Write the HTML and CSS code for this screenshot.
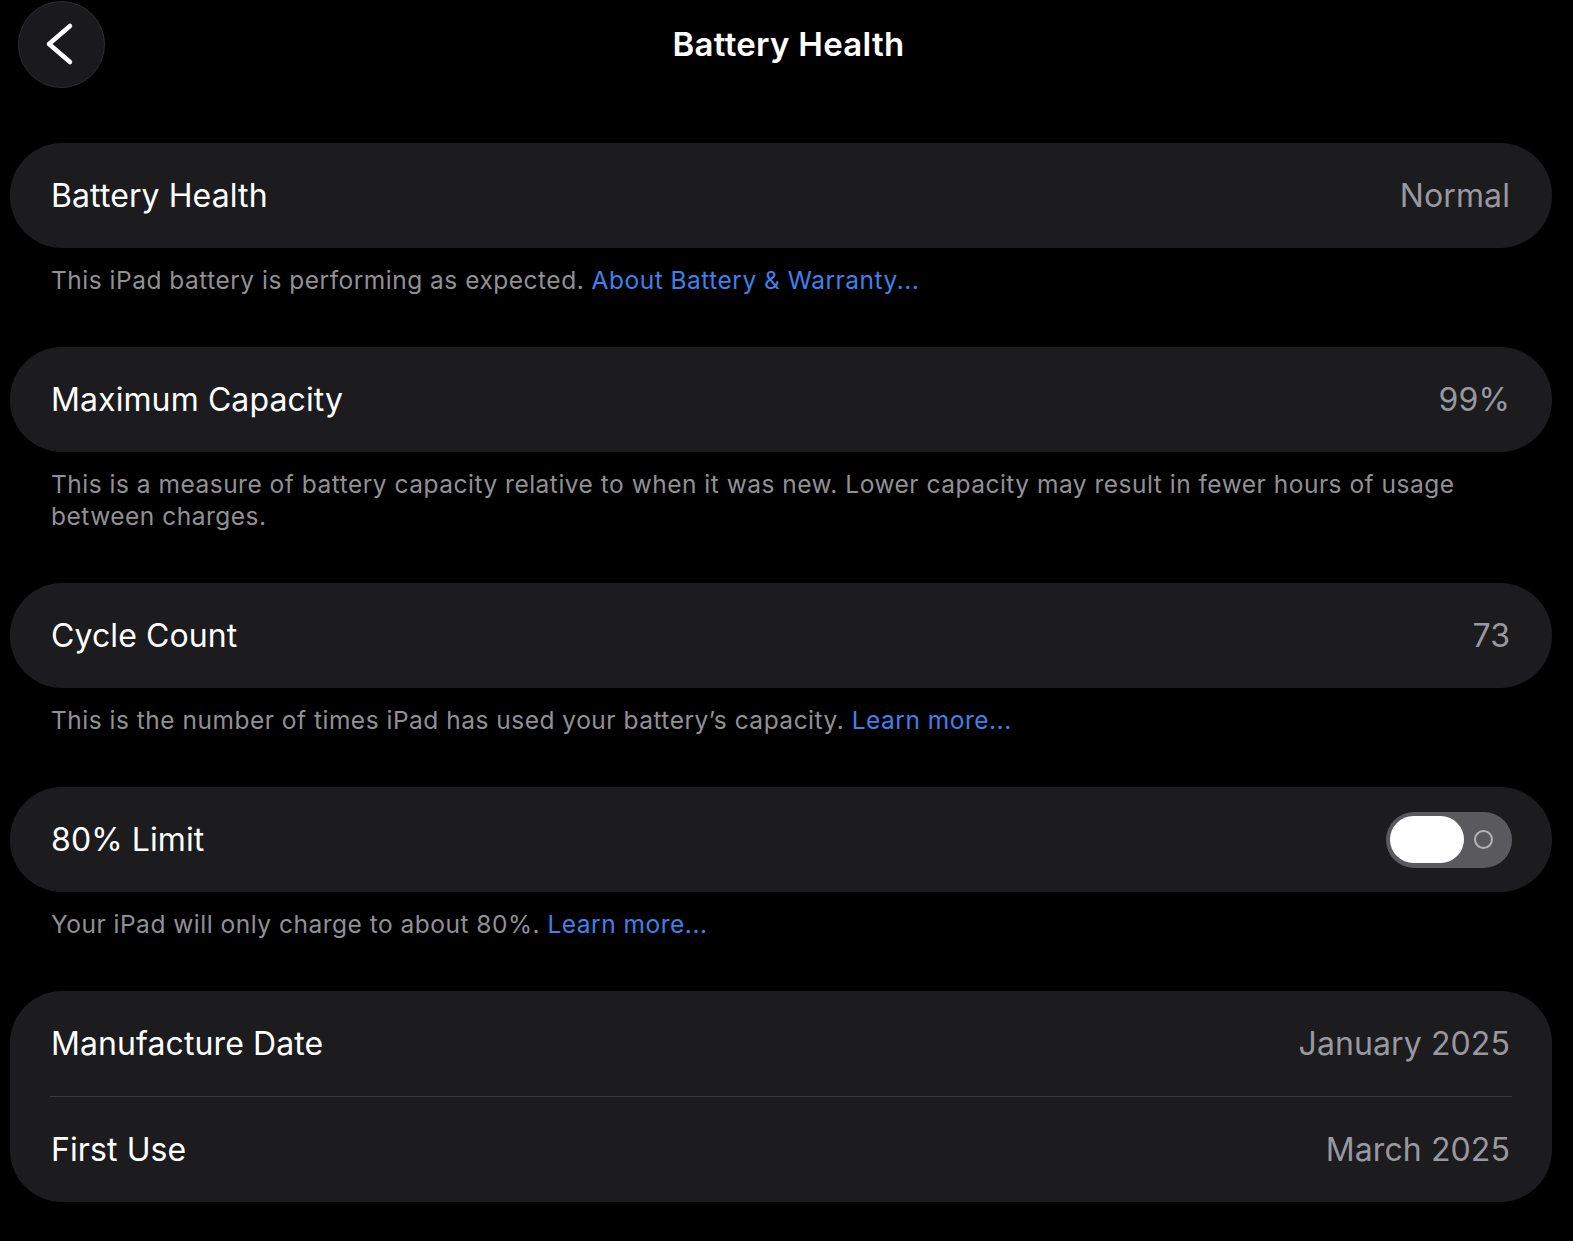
FILE: index.html
```html
<!DOCTYPE html>
<html lang="en">
<head>
    <meta charset="UTF-8">
    <meta name="viewport" content="width=device-width, initial-scale=1.0">
    <title>Battery Health</title>
    <link rel="stylesheet" href="styles.css">
</head>
<body>
    <header class="nav">
        <button class="back" aria-label="Back">
            <svg width="87" height="87" viewBox="0 0 87 87">
                <path d="M52 25 L31 43 L52 61" fill="none" stroke="#fff" stroke-width="4.5" stroke-linecap="round" stroke-linejoin="round"/>
            </svg>
        </button>
        <h1 class="title">Battery Health</h1>
        <div></div>
    </header>

    <main class="content">
        <section class="group">
            <div class="row">
                <span class="label">Battery Health</span>
                <span class="value">Normal</span>
            </div>
        </section>
        <p class="footnote">This iPad battery is performing as expected. <a href="#">About Battery &amp; Warranty...</a></p>

        <section class="group">
            <div class="row">
                <span class="label">Maximum Capacity</span>
                <span class="value">99%</span>
            </div>
        </section>
        <p class="footnote">This is a measure of battery capacity relative to when it was new. Lower capacity may result in fewer hours of usage between charges.</p>

        <section class="group">
            <div class="row">
                <span class="label">Cycle Count</span>
                <span class="value">73</span>
            </div>
        </section>
        <p class="footnote">This is the number of times iPad has used your battery’s capacity. <a href="#">Learn more...</a></p>

        <section class="group">
            <div class="row">
                <span class="label">80% Limit</span>
                <span class="toggle">
                    <span class="knob"></span>
                    <span class="off-mark"></span>
                </span>
            </div>
        </section>
        <p class="footnote">Your iPad will only charge to about 80%. <a href="#">Learn more...</a></p>

        <section class="group">
            <div class="row">
                <span class="label">Manufacture Date</span>
                <span class="value">January 2025</span>
            </div>
            <div class="divider"></div>
            <div class="row">
                <span class="label">First Use</span>
                <span class="value">March 2025</span>
            </div>
        </section>
    </main>
</body>
</html>
```

FILE: styles.css
```css
body {
    margin: 0;
    background-color: #000;
    color: #fff;
    font-family: Inter, "Noto Sans", sans-serif;
}

.nav {
    display: grid;
    grid-template-columns: 1fr auto 1fr;
    align-items: center;
    height: 88px;
    padding: 0 18px;
}

.back {
    width: 87px;
    height: 87px;
    padding: 0;
    border: 1px solid #2e2e30;
    border-radius: 50%;
    background-color: #1a1a1c;
    display: flex;
    align-items: center;
    justify-content: center;
    box-sizing: border-box;
}

.back svg {
    display: block;
    margin: -1px;
}

.title {
    margin: 0 0 0 4px;
    font-size: 33px;
    font-weight: 600;
    letter-spacing: 0.3px;
}

.content {
    margin: 55px 21px 0 10px;
}

.group {
    background-color: #1c1c1e;
    border-radius: 52px;
}

.row {
    display: flex;
    justify-content: space-between;
    align-items: center;
    height: 105px;
    padding: 0 42px 0 41px;
}

.label {
    font-size: 32px;
    letter-spacing: 0.1px;
}

.value {
    font-size: 32px;
    color: #98989e;
    letter-spacing: 0.1px;
}

.divider {
    height: 1px;
    margin: 0 40px 0 40px;
    background-color: #3d3d40;
}

.footnote {
    margin: 16px 0 51px;
    padding: 0 41px;
    font-size: 24.5px;
    line-height: 32px;
    letter-spacing: 0.5px;
    color: #909095;
}

.footnote a {
    color: #3f80ea;
    text-decoration: none;
}

.toggle {
    display: flex;
    align-items: center;
    justify-content: space-between;
    width: 126px;
    height: 56px;
    padding: 0 19px 0 4px;
    box-sizing: border-box;
    border-radius: 28px;
    background-color: #5a5a5e;
    margin-right: -2px;
}

.knob {
    width: 74px;
    height: 47px;
    border-radius: 24px;
    background-color: #fff;
}

.off-mark {
    width: 15px;
    height: 15px;
    border: 2px solid #b4b4b8;
    border-radius: 50%;
}
```
